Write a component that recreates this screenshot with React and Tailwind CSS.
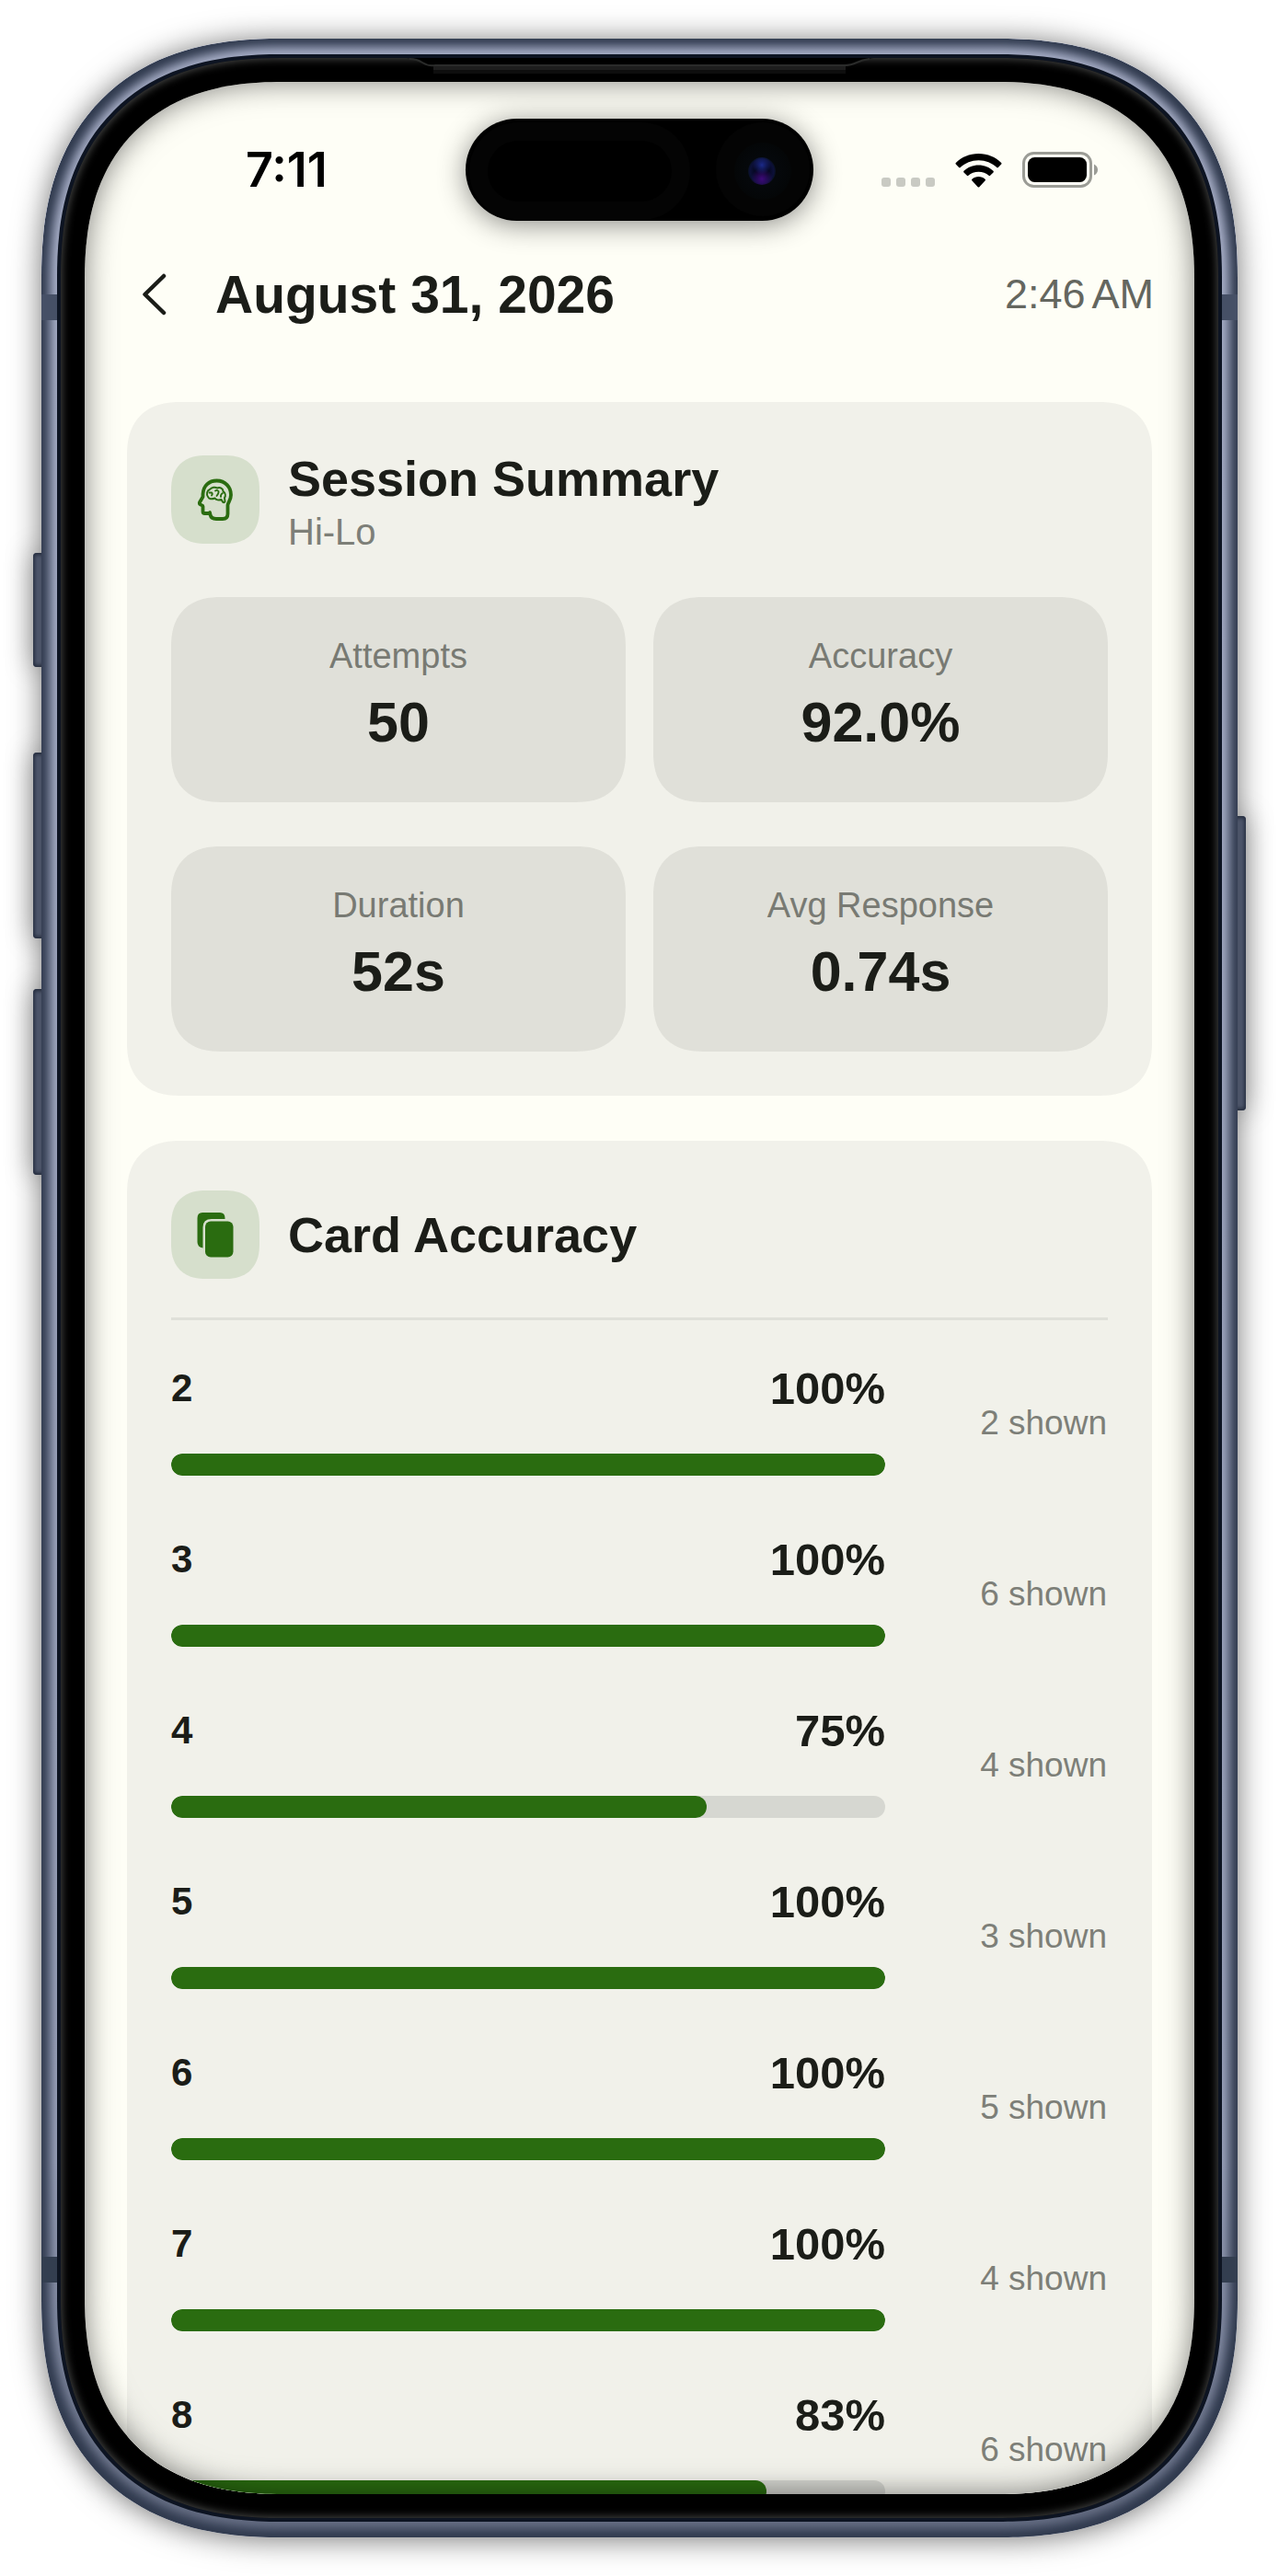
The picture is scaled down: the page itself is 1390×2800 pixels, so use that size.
import { useState } from 'react';

const stats = [
  { label: 'Attempts', value: '50' },
  { label: 'Accuracy', value: '92.0%' },
  { label: 'Duration', value: '52s' },
  { label: 'Avg Response', value: '0.74s' },
];

const cards = [
  { card: '2', correct: 2, shown: 2 },
  { card: '3', correct: 6, shown: 6 },
  { card: '4', correct: 3, shown: 4 },
  { card: '5', correct: 3, shown: 3 },
  { card: '6', correct: 5, shown: 5 },
  { card: '7', correct: 4, shown: 4 },
  { card: '8', correct: 5, shown: 6 },
];

function BrainIcon() {
  return (
    <svg width="40" height="46" viewBox="0 0 40 46" fill="none" stroke="#2a6c10" strokeLinejoin="round" strokeLinecap="round" aria-hidden="true">
      <path strokeWidth="3.8" d="M6.500 17C7 8 13 2.500 21.500 2.500C31 2.500 37 9.500 37 18C37 23 34 26 33.500 29V38.500Q33.500 44 28 44H21Q15.500 44 14.500 39.500L14 37Q13 38 12 38H8.500Q6.500 38 6.500 36V30.500Q6.500 29.500 5 29Q2.300 28 3 26L6.500 20Z" />
      <path strokeWidth="2" d="M12 20C10 17 11 13 14 12C16 9.500 20 9 22 10.500C25 9 28.500 11 28.500 14C31 16 31.500 19 30 21L30.500 25Q29.500 27 28 25.500L26.500 23C24 24 20.500 23.500 19.500 21.500C16 23 13 22.500 12 20Z" />
      <path strokeWidth="1.8" d="M13.500 15.500H16Q17.500 17 16 18.500M20 13.500Q22 12 23.500 14Q24 16 21.500 19M28 16Q25.500 17.500 26 20" />
    </svg>
  );
}

function CardsIcon() {
  return (
    <svg width="40" height="50" viewBox="0 0 40 50" fill="#2a6c10" aria-hidden="true">
      <path d="M6 1H25Q30.500 1 30.500 7V8H16Q6.500 8 6.500 17V39.500Q.5 38.500 .5 33V7Q.5 1 6 1Z" />
      <rect x="9" y="10.500" width="30.500" height="39" rx="6" />
    </svg>
  );
}

function WifiIcon() {
  return (
    <svg width="51" height="37" viewBox="0 0 51 37" fill="#000" aria-hidden="true">
      <path d="M25.500 0C35.500 0 44 3.800 50.200 9.900Q51 10.700 50.200 11.500L46.800 15Q46.100 15.700 45.300 15C40 10 33.200 7.200 25.500 7.200S11 10 5.700 15Q4.900 15.700 4.200 15L.8 11.500Q0 10.700 .8 9.900C7 3.800 15.500 0 25.500 0Z" />
      <path d="M25.500 12.500C31.800 12.500 37.400 14.900 41.500 18.800Q42.300 19.600 41.500 20.400L38.100 23.800Q37.400 24.500 36.600 23.800C33.600 21.200 29.800 19.700 25.500 19.700S17.400 21.200 14.400 23.800Q13.600 24.500 12.900 23.800L9.500 20.400Q8.700 19.600 9.500 18.800C13.600 14.900 19.200 12.500 25.500 12.500Z" />
      <path d="M25.500 25C28.200 25 30.700 26 32.600 27.700Q33.500 28.500 32.700 29.300L26.300 36.200Q25.500 37 24.700 36.200L18.300 29.300Q17.500 28.500 18.400 27.700C20.300 26 22.800 25 25.500 25Z" />
    </svg>
  );
}

function BatteryIcon() {
  return (
    <svg width="83" height="40" viewBox="0 0 83 40" fill="none" aria-hidden="true">
      <rect x="1.500" y="1.500" width="73" height="36" rx="11" stroke="#9b9c96" strokeWidth="3" />
      <rect x="6" y="6" width="64" height="27" rx="7.500" fill="#000" />
      <path d="M78 13.500Q82 15.500 82 19.500T78 25.500Z" fill="#9b9c96" />
    </svg>
  );
}

function StatusBar() {
  return (
    <div className="relative flex h-48 items-center justify-between pl-[175px] pr-[104px]">
      <span className="font-['Inter',sans-serif] text-[52px] font-semibold leading-none text-black">7:11</span>
      <div className="flex items-center gap-[22px]">
        <div className="flex gap-1.5 pt-[26px]">
          {[0, 1, 2, 3].map((dot) => (
            <span key={dot} className="size-2.5 rounded-[3px] bg-[#c9cac3]" />
          ))}
        </div>
        <WifiIcon />
        <BatteryIcon />
      </div>

      {/* dynamic island */}
      <div className="absolute left-1/2 top-10 h-[111px] w-[378px] -translate-x-1/2 rounded-full bg-black shadow-[0_4px_30px_rgba(0,0,0,0.45)]">
        <div className="absolute left-6 top-6 h-[66px] w-[200px] rounded-full shadow-[0_0_0_20px_#040404]" />
        <div className="absolute right-1 top-1 size-[102px] rounded-full bg-[#040404]" />
        <div className="absolute right-6 top-[26px] size-[62px] rounded-full bg-[radial-gradient(circle,#05080b_40%,#040607_70%)]" />
        <div className="absolute right-[41px] top-[42px] size-[30px] rounded-full bg-[radial-gradient(circle_at_50%_28%,#1c2a8a_0%,transparent_38%),radial-gradient(circle_at_50%_78%,#3d0a7a_0%,transparent_42%),radial-gradient(circle,#05061c_30%,#0c1038_60%,#071018_75%)]" />
      </div>
    </div>
  );
}

function IconTile({ children }) {
  return (
    <div className="flex size-24 shrink-0 items-center justify-center rounded-[34px] bg-[#d6dfcc] supports-[corner-shape:squircle]:rounded-[38px] supports-[corner-shape:squircle]:[corner-shape:superellipse(1.25)]">
      {children}
    </div>
  );
}

function Panel({ className, children }) {
  return (
    <section className={`rounded-[48px] bg-[#f1f1ea] px-12 supports-[corner-shape:squircle]:rounded-[58px] supports-[corner-shape:squircle]:[corner-shape:superellipse(1.25)] ${className}`}>
      {children}
    </section>
  );
}

function SessionSummary() {
  return (
    <Panel className="py-12">
      <header className="flex items-center gap-[31px]">
        <IconTile>
          <BrainIcon />
        </IconTile>
        <div>
          <h2 className="text-[54px] font-bold leading-[70px]">Session Summary</h2>
          <p className="text-[40px] leading-[46px] text-[#7d7f78]">Hi-Lo</p>
        </div>
      </header>
      <dl className="mt-12 grid grid-cols-2 gap-x-[30px] gap-y-12">
        {stats.map((stat) => (
          <div
            key={stat.label}
            className="flex flex-col gap-3.5 rounded-[44px] bg-[#e0e0d9] pb-[51px] pt-[42px] text-center supports-[corner-shape:squircle]:rounded-[54px] supports-[corner-shape:squircle]:[corner-shape:superellipse(1.25)]"
          >
            <dt className="text-[38px] leading-[44px] text-[#787a73]">{stat.label}</dt>
            <dd className="text-[61px] font-bold leading-[72px]">{stat.value}</dd>
          </div>
        ))}
      </dl>
    </Panel>
  );
}

function CardRow({ card, correct, shown }) {
  const accuracy = (correct / shown) * 100;

  return (
    <li className="flex items-center gap-12">
      <div className="flex-1">
        <div className="flex items-center justify-between font-bold leading-[38px]">
          <span className="text-[42px]">{card}</span>
          <span className="text-[49px]">{Math.round(accuracy)}%</span>
        </div>
        <div className="mt-[52px] h-6 overflow-hidden rounded-full bg-[#d6d7d1]">
          <div className="h-full rounded-full bg-[#2a6c10]" style={{ width: `${accuracy}%` }} />
        </div>
      </div>
      <span className="w-[194px] pr-px text-right text-[37px] leading-10 text-[#7d7f78]">{shown} shown</span>
    </li>
  );
}

function CardAccuracy() {
  return (
    <Panel className="pb-12 pt-[54px]">
      <header className="flex items-center gap-[31px] border-b-[3px] border-[#dfe0d9] pb-[42px]">
        <IconTile>
          <CardsIcon />
        </IconTile>
        <h2 className="text-[54px] font-bold leading-[70px]">Card Accuracy</h2>
      </header>
      <ul className="mt-[55px] flex flex-col gap-[72px]">
        {cards.map((row) => (
          <CardRow key={row.card} {...row} />
        ))}
      </ul>
    </Panel>
  );
}

function SessionScreen() {
  const [open, setOpen] = useState(true);

  return (
    <>
      <StatusBar />
      <div className="flex h-19 items-center px-11 pt-0.5">
        <button type="button" aria-label="Back" onClick={() => setOpen(!open)} className="px-[18px]">
          <svg width="27" height="46" viewBox="0 0 27 46" fill="none" stroke="#1b1d18" strokeWidth="4.500" strokeLinecap="round" strokeLinejoin="round" aria-hidden="true">
            <path d="M24 3L3.500 23L24 43" />
          </svg>
        </button>
        <h1 className="ml-[35px] flex-1 text-[57px] font-bold leading-[70px]">August 31, 2026</h1>
        <time className="flex gap-[7px] text-[45px] leading-[70px] text-[#64665f]">
          <span>2:46</span>
          <span>AM</span>
        </time>
      </div>
      {open && (
        <main className="mt-20 flex flex-col gap-[49px] px-[46px]">
          <SessionSummary />
          <CardAccuracy />
        </main>
      )}
    </>
  );
}

function SideButton({ className }) {
  return (
    <span
      className={`absolute w-[18px] rounded-[4px] bg-[#66718c] shadow-[inset_0_0_4px_2px_#2b354a,0_0_30px_rgba(0,0,0,0.4)] ${className}`}
    />
  );
}

export default function App() {
  return (
    <div className="bg-white px-[45px] pb-[43px] pt-[42px] font-['Liberation_Sans',Arial,sans-serif] text-[#1b1d18]">
      <div className="relative">
        <SideButton className="left-[-9px] top-[559px] h-[124px]" />
        <SideButton className="left-[-9px] top-[776px] h-[202px]" />
        <SideButton className="left-[-9px] top-[1033px] h-[202px]" />
        <SideButton className="right-[-9px] top-[845px] h-[320px]" />

        {/* metal band */}
        <div className="relative overflow-hidden rounded-[226px] bg-linear-to-b from-[#aab1ca] via-[#9ca4bd] via-85% to-[#666e84] p-[17px] shadow-[0_2px_32px_rgba(0,0,0,0.55)] supports-[corner-shape:squircle]:rounded-[260px] supports-[corner-shape:squircle]:[corner-shape:superellipse(1.25)]">
          <div className="pointer-events-none absolute inset-0 rounded-[226px] shadow-[inset_0_0_12px_9px_#2f394d] supports-[corner-shape:squircle]:rounded-[260px] supports-[corner-shape:squircle]:[corner-shape:superellipse(1.25)]" />
          <div className="absolute inset-x-0 top-[278px] h-7 bg-[#465066]" />
          <div className="absolute inset-x-0 bottom-[277px] h-7 bg-[#333e50]" />
          <div className="relative rounded-[209px] bg-[#0d1422] p-1 supports-[corner-shape:squircle]:rounded-[243px] supports-[corner-shape:squircle]:[corner-shape:superellipse(1.25)]">
            {/* bezel */}
            <div className="relative rounded-[205px] bg-black p-[26px] shadow-[inset_0_0_10px_1px_#4a4b4a] supports-[corner-shape:squircle]:rounded-[239px] supports-[corner-shape:squircle]:[corner-shape:superellipse(1.25)]">
              <svg className="absolute left-1/2 top-0 -translate-x-1/2" width="508" height="20" viewBox="0 0 508 20" fill="none" aria-hidden="true">
                <path d="M0 0Q10 0 16 4T30 7V20H478V7Q486 7 492 4T508 0Z" fill="#000" />
                <path d="M4 1Q12 1 18 5T32 8H476Q484 8 490 5T504 1" stroke="#2a2b2a" strokeWidth="2" />
                <path d="M30 11H478" stroke="#1e1e1e" strokeWidth="4" />
                <path d="M30 15H478" stroke="#0e0e0e" strokeWidth="4" />
              </svg>
              <div className="relative aspect-[1206/2622] overflow-hidden rounded-[188px] bg-[#fefef6] supports-[corner-shape:squircle]:rounded-[215px] supports-[corner-shape:squircle]:[corner-shape:superellipse(1.25)]">
                <SessionScreen />
                <div className="pointer-events-none absolute inset-0 rounded-[188px] shadow-[inset_0_0_32px_rgba(0,0,0,0.5)] supports-[corner-shape:squircle]:rounded-[215px] supports-[corner-shape:squircle]:[corner-shape:superellipse(1.25)]" />
              </div>
            </div>
          </div>
        </div>
      </div>
    </div>
  );
}
